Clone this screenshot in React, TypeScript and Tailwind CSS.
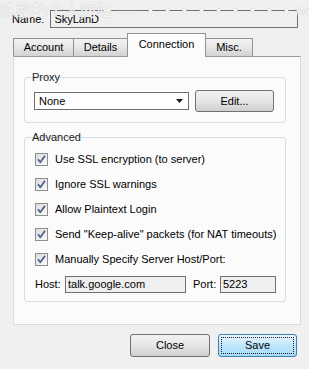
import React from 'react';

const Check: React.FC = () => (
  <div className="w-[13px] h-[13px] border border-[#8e8f8f] bg-gradient-to-br from-[#dcdcdc] to-[#fbfbfb] flex items-center justify-center shrink-0">
    <svg width="11" height="11" viewBox="0 0 11 11">
      <path d="M2 5.2 L4.3 8.3 L9 1.8" fill="none" stroke="#4a5d8c" strokeWidth="1.7" strokeLinejoin="round" />
    </svg>
  </div>
);

const GroupBox: React.FC<{ title: string; className?: string; children: React.ReactNode }> = ({ title, className, children }) => (
  <div className={`relative ml-[10px] w-[262px] border border-[#d5dfe5] rounded-[3px] ${className ?? ''}`}>
    <span className="absolute left-[7px] -top-[6px] leading-[11px] text-[#222]">{title}</span>
    {children}
  </div>
);

const App: React.FC = () => {
  const options = [
    'Use SSL encryption (to server)',
    'Ignore SSL warnings',
    'Allow Plaintext Login',
    'Send "Keep-alive" packets (for NAT timeouts)',
    'Manually Specify Server Host/Port:',
  ];

  const tabs = [
    { label: 'Account', w: 'w-[61px]' },
    { label: 'Details', w: 'w-[55px]' },
    { label: 'Connection', w: 'w-[79px]', active: true },
    { label: 'Misc.', w: 'w-[48px]' },
  ];

  return (
    <div className="relative w-[309px] h-[369px] overflow-hidden bg-[#f0f0f0] text-[11px] text-black font-['Liberation_Sans',Arial,sans-serif]">
      {/* watermark over the top edge */}
      <div className="absolute -top-[3px] left-0 whitespace-nowrap text-[16px] text-[#f7f7f7] [text-shadow:0_0_1px_#b8b8b8] font-['Noto_Sans_CJK_SC',sans-serif] pointer-events-none">
        陈鹏的个人网站 ——<span className="tracking-[1px]">·········</span>www.chenpeng123.com
      </div>

      <div className="pt-[10px] pl-[12px] pr-[11px] flex items-center gap-[6px]">
        <span>Name:</span>
        <div className="flex-1 h-[18px] border border-[#6f6f6f] bg-[#efefef] px-[3px] leading-[16px]">SkyLanD</div>
      </div>

      <div className="mt-[5px] ml-[13px] h-[23px] flex items-end">
        {tabs.map((t, i) =>
          t.active ? (
            <div
              key={t.label}
              className={`relative z-10 -ml-px ${t.w} h-[24px] -mb-px border border-b-0 border-[#8c9396] bg-[#fcfcfc] flex items-start justify-center pt-[4px] leading-[13px]`}
            >
              {t.label}
            </div>
          ) : (
            <div
              key={t.label}
              className={`${i > 0 ? '-ml-px' : ''} ${t.w} h-[18px] border border-b-0 border-[#8c9396] bg-gradient-to-b from-[#f3f3f3] via-[#e6e6e6] to-[#d3d3d3] flex items-center justify-center leading-[13px]`}
            >
              {t.label}
            </div>
          ),
        )}
      </div>

      <div className="ml-[13px] w-[288px] h-[269px] border border-[#d9dcde] border-t-[#959a9d] bg-[#fbfbfb] pt-[20px]">
        <GroupBox title="Proxy">
          <div className="pt-[12px] pb-[10px] pl-[9px] flex items-center gap-[6px]">
            <div className="relative w-[155px] h-[18px] border border-[#6f6f6f] bg-white pl-[4px] leading-[16px]">
              None
              <svg className="absolute right-[5px] top-[6px]" width="7" height="4" viewBox="0 0 7 4">
                <path d="M0 0 H7 L3.5 4 Z" fill="#1a1a1a" />
              </svg>
            </div>
            <div className="w-[79px] h-[22px] rounded-[3px] border border-[#707070] bg-gradient-to-b from-[#f2f2f2] via-[#e6e6e6] to-[#cfcfcf] flex items-center justify-center">
              Edit...
            </div>
          </div>
        </GroupBox>

        <GroupBox title="Advanced" className="mt-[14px]">
          <div className="pt-[9px] pb-[8px] pl-[10px]">
            {options.map((o) => (
              <div key={o} className="h-[25px] flex items-center gap-[7px]">
                <Check />
                <span>{o}</span>
              </div>
            ))}
            <div className="mt-[4px] flex items-center">
              <span className="w-[30px]">Host:</span>
              <div className="w-[121px] h-[17px] border border-[#6f6f6f] bg-[#efefef] pl-[2px] leading-[15px]">talk.google.com</div>
              <span className="ml-[7px] w-[27px]">Port:</span>
              <div className="w-[56px] h-[17px] border border-[#6f6f6f] bg-[#efefef] pl-[2px] leading-[15px]">5223</div>
            </div>
          </div>
        </GroupBox>
      </div>

      <div className="mt-[9px] pr-[12px] flex justify-end gap-[8px]">
        <div className="w-[80px] h-[23px] rounded-[3px] border border-[#707070] bg-gradient-to-b from-[#f2f2f2] via-[#e6e6e6] to-[#cfcfcf] flex items-center justify-center">
          Close
        </div>
        <div className="relative w-[79px] h-[23px] rounded-[3px] border border-[#3c7fb1] bg-gradient-to-b from-[#eaf6fd] via-[#bee6fd] to-[#a7d9f5] flex items-center justify-center">
          <div className="absolute inset-[2px] border border-dotted border-[#222]" />
          Save
        </div>
      </div>
    </div>
  );
};

export default App;
